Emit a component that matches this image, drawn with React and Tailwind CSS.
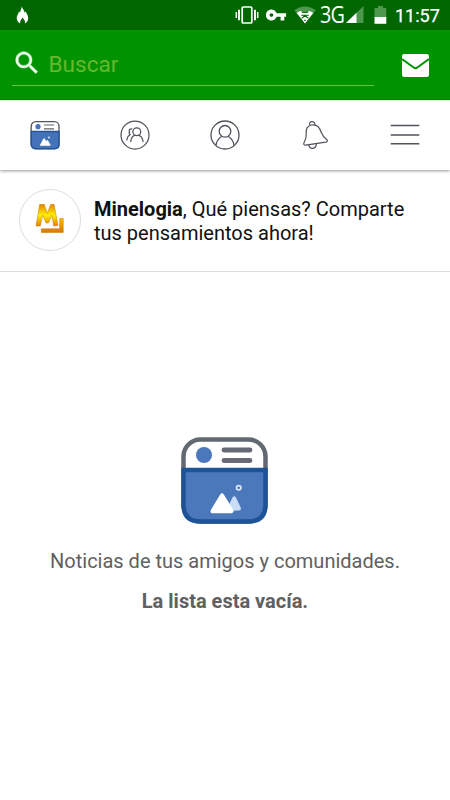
import React from 'react';

function StatusBar() {
  return (
    <div className="flex h-[30px] items-center bg-[#006600] text-white">
      <svg className="ml-4 h-[18px] w-[13px]" viewBox="0 0 13 18" fill="currentColor">
        <path d="M5.8 0.3C6 2.6 8.4 4 8.7 6.8L9.8 5.3C10 7.5 12.3 9 12.2 12.2C12.1 14.6 11 16.4 8.8 17.4C9.7 14.9 7.9 13.6 6.6 11.6C5.6 13.5 3.7 14.8 4.2 17.4C2 16.5 0.8 14.5 0.7 12.3C0.6 9.2 2.6 8 2.9 5.4L4.1 6.6C4.3 4 5.8 2.8 5.8 0.3Z" />
      </svg>
      <svg className="ml-[206px] h-[18px] w-[24px]" viewBox="0 0 24 18" fill="none" stroke="currentColor">
        <rect x="7.2" y="1" width="9.6" height="16" rx="1" strokeWidth="1.7" />
        <path d="M4 3.8v10.4M20 3.8v10.4" strokeWidth="1.9" />
        <path d="M1.3 6v6M22.7 6v6" strokeWidth="1.5" />
      </svg>
      <svg className="ml-[6px] h-[22px] w-[22px]" viewBox="0 0 24 24" fill="currentColor">
        <path d="M12.65 10C11.83 7.67 9.61 6 7 6c-3.31 0-6 2.69-6 6s2.69 6 6 6c2.61 0 4.83-1.67 5.65-4H17v4h4v-4h2v-4H12.65zM7 14c-1.1 0-2-.9-2-2s.9-2 2-2 2 .9 2 2-.9 2-2 2z" />
      </svg>
      <svg className="ml-[7px] h-[18px] w-[22px]" viewBox="0 0 22 18" fill="currentColor">
        <path d="M0.3 4.2C6.5-0.9 15.5-0.9 21.7 4.2L18.2 8.5C14 5 8 5 3.8 8.5Z" fill="#4d984d" />
        <path d="M2.7 7.1C4.2 5.9 5.6 5.2 7 4.8L8.2 7H13.8L15 4.8C16.5 5.2 18 6 19.3 7.1L11 17.5Z" />
        <path d="M7.2 9.2H14.8M7.7 12.3L11 9.8L14.3 12.3M10 14.2H12" stroke="#006600" strokeWidth="1.1" fill="none" />
      </svg>
      <span className="-mr-[6px] mb-[2px] ml-[4px] inline-block w-[32px] origin-left scale-x-[0.86] whitespace-nowrap font-['Open_Sans',sans-serif] text-[23px] leading-[34px] tracking-[-0.8px]">3G</span>
      <svg className="h-[18px] w-[18px]" viewBox="0 0 18 18">
        <path d="M17.5 0V17H0Z" fill="#4d984d" />
        <path d="M10.5 6.8V17H0Z" fill="#fff" />
      </svg>
      <svg className="ml-[10px] h-[18px] w-[13px]" viewBox="0 0 13 18">
        <path d="M4 0h5v2h3.3v9.5H0.5V2H4z" fill="#4d984d" />
        <path d="M0.5 11h11.8v6.8H0.5z" fill="#fff" />
      </svg>
      <span className="ml-[8px] mt-px text-[18px] font-normal leading-[29px] [-webkit-text-stroke:0.25px_white]">11:57</span>
    </div>
  );
}

function SearchHeader() {
  return (
    <header className="flex h-[70px] items-start bg-[#009300]">
      <div className="ml-3 mt-[18px] flex h-[38px] w-[362px] border-b border-[#66c43c]">
        <svg className="h-[30px] w-[30px] shrink-0" viewBox="0 0 24 24" fill="#eaffea" stroke="#eaffea" strokeWidth="0.35">
          <path d="M15.5 14h-.79l-.28-.27C15.41 12.59 16 11.11 16 9.5 16 5.91 13.09 3 9.5 3S3 5.91 3 9.5 5.91 16 9.5 16c1.61 0 3.09-.59 4.23-1.57l.27.28v.79l5 4.99L20.49 19l-4.99-5zm-6 0C7.01 14 5 11.99 5 9.5S7.01 5 9.5 5 14 7.01 14 9.5 11.99 14 9.5 14z" />
        </svg>
        <span className="ml-[6.5px] mt-[3px] text-[22.6px] leading-7 text-[#66b82e]">Buscar</span>
      </div>
      <svg className="ml-[28px] mt-[24px] h-[23px] w-[27px]" viewBox="0 0 27 23">
        <rect width="27" height="23" rx="2.2" fill="#fff" />
        <path d="M0 5L11.7 13.5Q13.5 14.8 15.3 13.5L27 5" fill="none" stroke="#009300" strokeWidth="2" />
      </svg>
    </header>
  );
}

function FeedIcon() {
  return (
    <svg className="h-[30px] w-[30px]" viewBox="0 0 30 30">
      <rect x="1.2" y="1.7" width="27.8" height="27" rx="4.5" fill="#fff" stroke="#50545e" strokeWidth="1.3" />
      <path d="M1.2 11.5H29V24.2Q29 28.7 24.5 28.7H5.7Q1.2 28.7 1.2 24.2Z" fill="#4473b9" stroke="#255597" strokeWidth="1.4" />
      <circle cx="8" cy="6.7" r="2.6" fill="#4473b9" />
      <path d="M14 5H24M14 8.8H24" stroke="#5d626b" strokeWidth="1.2" />
      <path d="M9.8 25.5L13.2 19Q14 17.6 14.9 19L16.2 21L17 20.2Q17.6 19.8 18.2 21L20.6 24.8Q20.6 25.8 19.6 25.8H10.2Z" fill="#fff" />
      <circle cx="19" cy="17.4" r="1" fill="#dce6f7" />
    </svg>
  );
}

function NavBar() {
  return (
    <nav className="relative grid h-[70px] grid-cols-5 place-items-center border-t border-[#d6ffd6] bg-white pb-px shadow-[0_1px_3px_rgba(0,0,0,0.42)]">
      <FeedIcon />
      <svg className="h-[30px] w-[30px]" viewBox="0 0 30 30" fill="none" stroke="#50535b" strokeWidth="1.25" strokeLinecap="round">
        <circle cx="15" cy="15" r="14" />
        <circle cx="16.8" cy="11.8" r="3.9" />
        <path d="M10.8 21.5C11 18.3 12.3 16.4 14.6 15.3M18.9 15.3C21.2 16.2 22.7 18.2 23 21.5" />
        <path d="M11.7 8.8C9.5 8.6 8.7 10.2 9.5 12L9.1 13L10.1 14.6C8.4 15.5 7.2 17.1 6.8 19.8" />
      </svg>
      <svg className="h-[30px] w-[30px]" viewBox="0 0 30 30" fill="none" stroke="#50535b" strokeWidth="1.3">
        <circle cx="15" cy="15" r="14" />
        <circle cx="15" cy="11.3" r="5.8" />
        <path d="M6 25.5C6.5 20.8 8.7 18.2 11.7 16.2M18.3 16.2C21.3 18.2 23.5 20.8 24 25.5" />
      </svg>
      <svg className="h-[30px] w-[30px]" viewBox="0 0 30 30" fill="none" stroke="#50535b" strokeWidth="1.2" strokeLinejoin="round">
        <path d="M11.4 5C7.2 6.1 5.7 9.3 6.2 13.4C6.6 17.2 6 19.4 4.1 22.5Q2.9 25.3 5.6 25.2L25.8 22.2Q28.2 21.5 26.9 19.7C23.9 17.4 22.5 15.9 21.2 12.3C19.8 7.5 16.6 4 11.4 5Z" />
        <path d="M9.8 5.3C9 2.7 10.4 1.6 12 1.6C13.8 1.6 14.9 2.8 14.8 4.9M8.8 24.8C9.2 27.3 10.7 28.4 12.7 28.3C15 28.1 16.4 26.4 16.3 23.8" />
      </svg>
      <svg className="h-[30px] w-[30px]" viewBox="0 0 30 30">
        <path d="M0.7 5.5H29.3M0.7 15H29.3M0.7 23.7H29.3" stroke="#50535b" strokeWidth="1.4" />
      </svg>
    </nav>
  );
}

function Avatar() {
  return (
    <div className="flex h-[62px] w-[62px] shrink-0 items-center justify-center rounded-full border border-[#dedede] pb-[2px]">
      <svg className="h-[30px] w-[30px]" viewBox="0 0 30 30">
        <defs>
          <linearGradient id="gold" x1="0" y1="0" x2="0" y2="1">
            <stop offset="0" stopColor="#df8400" />
            <stop offset="0.5" stopColor="#fff000" />
            <stop offset="1" stopColor="#e37b00" />
          </linearGradient>
          <linearGradient id="bar" x1="0" y1="0" x2="0" y2="1">
            <stop offset="0" stopColor="#ffbd00" />
            <stop offset="1" stopColor="#dc7900" />
          </linearGradient>
        </defs>
        <path d="M1 22L4.7 0.3H9.2L12.3 9.2L15.8 0.3H19L23 21.5L18.7 22L16.8 11.2L13.6 19H11L7.7 11.2L5.2 22Z" fill="url(#gold)" stroke="#cf7700" strokeWidth="0.5" />
        <path d="M24.7 14.5H28.2V28.4H6.3V24.8H24.7Z" fill="url(#bar)" stroke="#bf6800" strokeWidth="0.5" />
      </svg>
    </div>
  );
}

function EmptyFeed() {
  return (
    <main className="flex flex-col items-center pt-[164px] text-[#606060]">
      <svg className="ml-[-2px] h-[88px] w-[88px]" viewBox="0 0 88 88">
        <rect x="3.5" y="3.5" width="82" height="82" rx="17" fill="#fff" stroke="#636973" strokeWidth="4.5" />
        <path d="M3.5 34H85.5V68.5Q85.5 85.5 68.5 85.5H20.5Q3.5 85.5 3.5 68.5Z" fill="#4b77bb" stroke="#1e5398" strokeWidth="4.5" />
        <circle cx="24" cy="19" r="8" fill="#4b77bb" />
        <path d="M44 14H70M44 24.5H70" stroke="#676975" strokeWidth="4.8" strokeLinecap="round" />
        <path d="M46 75L52.5 61.5Q54.3 59 56 61.5L60.8 71.8Q61.5 74.6 58.5 74.6Z" fill="#cbdcf8" />
        <path d="M31 73.8L40.2 58.5Q42 56 43.8 58.5L53.2 73.8Q54.3 77.3 51 77.3H32.6Q29.5 77.3 31 73.8Z" fill="#fff" />
        <circle cx="58.7" cy="51.8" r="2.2" fill="none" stroke="#dce8ff" strokeWidth="1.7" />
      </svg>
      <p className="mt-[24px] text-[20px] leading-[27px]">Noticias de tus amigos y comunidades.</p>
      <p className="mt-[13px] text-[20px] font-bold leading-[27px]">La lista esta vacía.</p>
    </main>
  );
}

export default function App() {
  return (
    <div className="h-[800px] w-[450px] overflow-hidden bg-white font-[Roboto,sans-serif]">
      <StatusBar />
      <SearchHeader />
      <NavBar />
      <section className="flex h-[102px] items-start border-b border-[#dddddd] pl-[19px] pt-[19px]">
        <Avatar />
        <p className="ml-[13px] mt-[8px] whitespace-nowrap text-[20px] leading-6 text-[#111111]">
          <strong className="font-bold">Minelogia</strong>, Qué piensas? Comparte
          <br />
          tus pensamientos ahora!
        </p>
      </section>
      <EmptyFeed />
    </div>
  );
}
